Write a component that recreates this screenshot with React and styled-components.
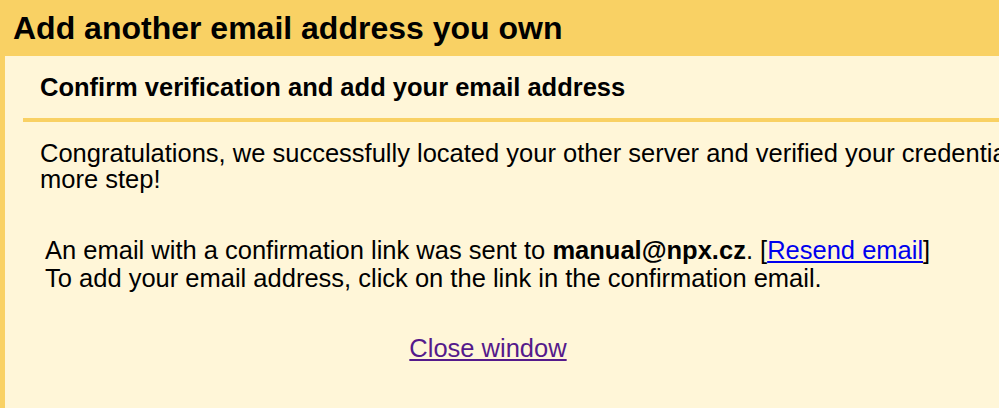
import React from "react";
import styled, { createGlobalStyle } from "styled-components";

const YELLOW = "#f9d164";
const CREAM = "#fff6d8";

const GlobalStyle = createGlobalStyle`
  html, body {
    margin: 0;
    padding: 0;
    background: ${CREAM};
    overflow: hidden;
  }
  body {
    font-family: "Liberation Sans", Arial, Helvetica, sans-serif;
    color: #000;
  }
`;

const Page = styled.div`
  width: 1240px;
  min-height: 408px;
  display: flex;
  flex-direction: column;
`;

const Header = styled.h1`
  margin: 0;
  height: 56px;
  padding-left: 13px;
  display: flex;
  align-items: center;
  background: ${YELLOW};
  font-size: 32px;
  font-weight: bold;
`;

const Panel = styled.div`
  flex: 1;
  min-height: 352px;
  border-left: 5px solid ${YELLOW};
  background: ${CREAM};
  padding-left: 18px;
`;

const SectionTitle = styled.h2`
  margin: 0;
  box-sizing: border-box;
  height: 66px;
  padding-left: 17px;
  display: flex;
  align-items: center;
  border-bottom: 4px solid ${YELLOW};
  font-size: 25.5px;
  font-weight: bold;
`;

const Body = styled.div`
  padding-left: 17px;
  width: 1110px;
`;

const Para = styled.p`
  margin: 18px 0 0;
  font-size: 25.5px;
  line-height: 26px;
`;

const Notice = styled.div`
  margin-top: 44px;
  padding-left: 5px;
  font-size: 25.5px;
  line-height: 28px;
`;

const Link = styled.a`
  color: ${(p) => (p.$visited ? "#551a8b" : "#0000ee")};
  text-decoration: underline;
  cursor: pointer;
`;

const CloseRow = styled.div`
  width: 930px;
  margin-left: -17px;
  margin-top: 42px;
  text-align: center;
  font-size: 25.5px;
  line-height: 28px;
`;

export default function App() {
  return (
    <>
      <GlobalStyle />
      <Page>
        <Header>Add another email address you own</Header>
        <Panel>
          <SectionTitle>Confirm verification and add your email address</SectionTitle>
          <Body>
            <Para>
              Congratulations, we successfully located your other server and verified your
              credentials. Just one more step!
            </Para>
            <Notice>
              An email with a confirmation link was sent to <b>manual@npx.cz</b>. [
              <Link href="#">Resend email</Link>]
              <br />
              To add your email address, click on the link in the confirmation email.
            </Notice>
            <CloseRow>
              <Link href="#" $visited>
                Close window
              </Link>
            </CloseRow>
          </Body>
        </Panel>
      </Page>
    </>
  );
}
